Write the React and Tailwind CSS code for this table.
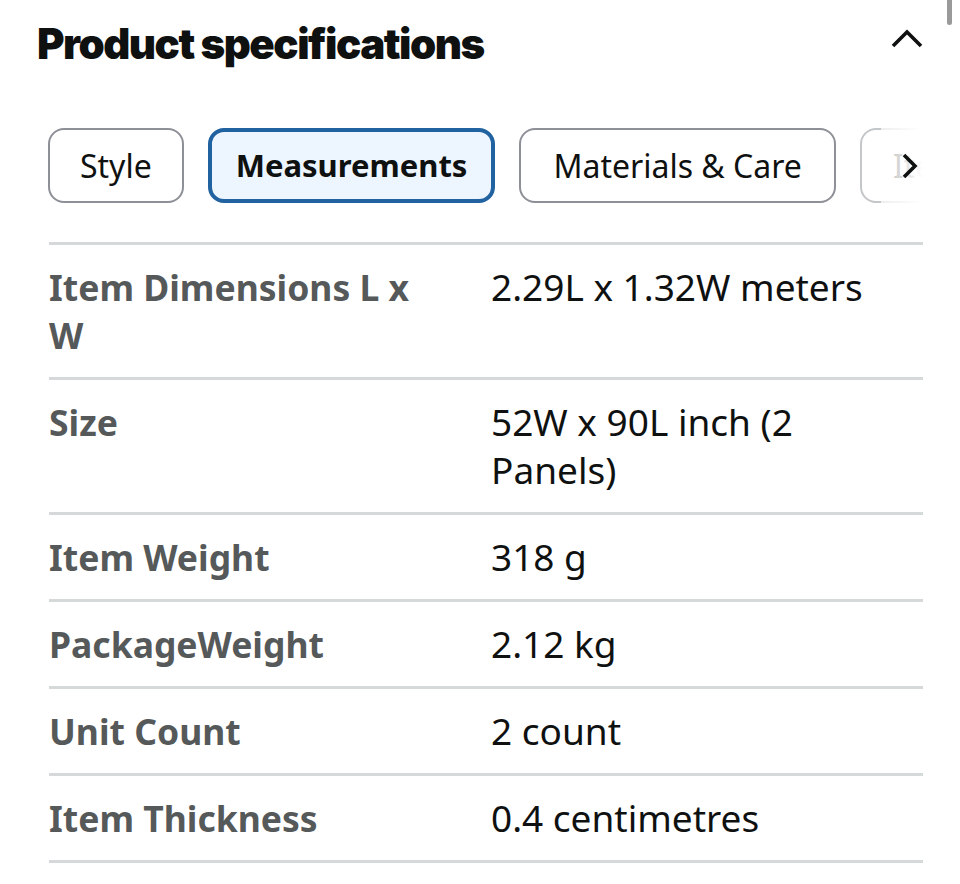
import React from "react";

const rows = [
  ["Item Dimensions L x W", "2.29L x 1.32W meters"],
  ["Size", "52W x 90L inch (2 Panels)"],
  ["Item Weight", "318 g"],
  ["PackageWeight", "2.12 kg"],
  ["Unit Count", "2 count"],
  ["Item Thickness", "0.4 centimetres"],
];

export default function App() {
  return (
    <div
      className="relative w-[960px] h-[884px] bg-white overflow-hidden"
      style={{ fontFamily: '"Noto Sans", "Open Sans", Arial, sans-serif' }}
    >
      {/* scrollbar */}
      <div className="absolute right-[8px] top-[-6px] w-[5px] h-[31px] rounded-full bg-[#9a9a9a]" />

      {/* header */}
      <div className="flex items-center justify-between pl-[37px] pr-[36px] pt-[14px] h-[74px]">
        <h2
          className="text-[42px] leading-[48px] text-[#0f1111] tracking-[-1.5px]"
          style={{ fontFamily: 'Inter, Roboto, Arial, sans-serif', fontWeight: 900 }}
        >
          Product specifications
        </h2>
        <svg width="34" height="22" viewBox="0 0 34 22" className="mt-[-12px]">
          <path d="M3 19 L17 5 L31 19" fill="none" stroke="#0f1111" strokeWidth="3.6" />
        </svg>
      </div>

      {/* tabs */}
      <div className="relative ml-[48px] mt-[54px] w-[875px] overflow-hidden">
        <div className="flex gap-[24px] items-center">
          <div className="shrink-0 h-[75px] px-[30px] flex items-center rounded-[16px] border-2 border-[#8d9096] text-[32px] text-[#0f1111]">
            Style
          </div>
          <div className="shrink-0 h-[75px] px-[24px] flex items-center rounded-[16px] border-[4px] border-[#2162a1] bg-[#edf6ff] text-[31px] font-bold text-[#0f1111]">
            Measurements
          </div>
          <div className="shrink-0 h-[75px] px-[32px] flex items-center rounded-[16px] border-2 border-[#8d9096] text-[32px] text-[#0f1111]">
            Materials &amp; Care
          </div>
          <div className="shrink-0 h-[75px] px-[31px] flex items-center rounded-[16px] border-2 border-[#c4c7ca] text-[32px] text-[#0f1111]">
            Item
          </div>
        </div>
        <div className="absolute right-0 top-0 h-[75px] w-[42px] bg-gradient-to-r from-white/70 to-white flex items-center justify-end pr-[4px]">
          <svg width="18" height="28" viewBox="0 0 18 28">
            <path d="M3 3 L14 14 L3 25" fill="none" stroke="#0f1111" strokeWidth="3.6" />
          </svg>
        </div>
      </div>

      {/* table */}
      <div className="ml-[49px] mt-[39px] w-[874px] border-t-[3px] border-[#d5d9d9]">
        {rows.map(([k, v]) => (
          <div
            key={k}
            className="flex border-b-[3px] border-[#d5d9d9] py-[18px] leading-[48px]"
          >
            <div className="w-[442px] shrink-0 pr-[52px] text-[35.5px] font-bold text-[#565959]">{k}</div>
            <div className="flex-1 pr-[40px] text-[37px] text-[#0f1111]">{v}</div>
          </div>
        ))}
      </div>
    </div>
  );
}
